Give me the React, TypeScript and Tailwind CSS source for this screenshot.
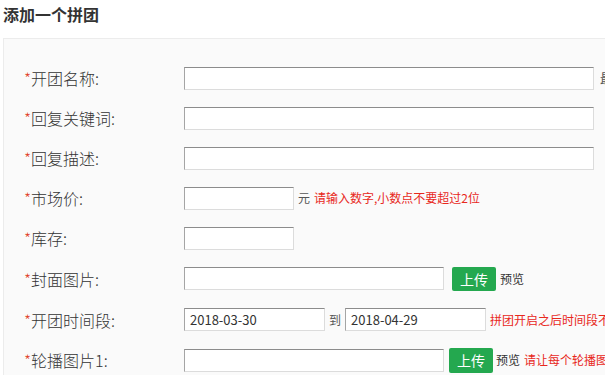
const font = { fontFamily: '"Microsoft YaHei", "Noto Sans CJK SC", "Noto Sans", sans-serif' };

function Label({ text }: { text: string }) {
  return (
    <div className="w-[180px] shrink-0 pl-[20px] text-[16px] font-light text-[#333]">
      <span className="text-[#e0402a]">*</span>
      {text}
    </div>
  );
}

function Field({ w, value }: { w: string; value?: string }) {
  return (
    <div
      className={`${w} h-[23px] shrink-0 bg-white border border-t-[#8c8c8c] border-l-[#a5a5a5] border-r-[#dcdcdc] border-b-[#dcdcdc] px-[5px] text-[13px] leading-[21px] text-[#333]`}
    >
      {value}
    </div>
  );
}

export default function App() {
  return (
    <div className="h-[375px] w-[605px] overflow-hidden bg-white whitespace-nowrap" style={font}>
      <div className="px-[3px] pt-[3px] text-[16px] font-bold leading-[22px] text-[#333]">添加一个拼团</div>
      <div className="ml-[3px] mt-[13px] w-[700px] border border-[#ececec] bg-[#fafafa] pt-[19px] pb-[20px]">
        <div className="flex h-[40px] items-center">
          <Label text="开团名称:" />
          <Field w="w-[410px]" />
          <span className="ml-[6px] text-[13px] text-[#555]">最多输入</span>
        </div>
        <div className="flex h-[40px] items-center">
          <Label text="回复关键词:" />
          <Field w="w-[410px]" />
        </div>
        <div className="flex h-[40px] items-center">
          <Label text="回复描述:" />
          <Field w="w-[410px]" />
        </div>
        <div className="flex h-[40px] items-center">
          <Label text="市场价:" />
          <Field w="w-[110px]" />
          <span className="ml-[4px] text-[12px] text-[#555]">元</span>
          <span className="ml-[4px] text-[12px] text-[#e8281c]">请输入数字,小数点不要超过2位</span>
        </div>
        <div className="flex h-[40px] items-center">
          <Label text="库存:" />
          <Field w="w-[110px]" />
        </div>
        <div className="flex h-[41px] items-center">
          <Label text="封面图片:" />
          <Field w="w-[260px]" />
          <div className="ml-[8px] h-[24px] w-[44px] shrink-0 rounded-[2px] bg-[#24a84f] text-center text-[14px] leading-[24px] text-white">
            上传
          </div>
          <span className="ml-[4px] text-[12px] text-[#333]">预览</span>
        </div>
        <div className="flex h-[41px] items-center">
          <Label text="开团时间段:" />
          <Field w="w-[141px]" value="2018-03-30" />
          <span className="mx-[4px] text-[12px] text-[#555]">到</span>
          <Field w="w-[141px]" value="2018-04-29" />
          <span className="ml-[4px] text-[12px] text-[#e8281c]">拼团开启之后时间段不可修改</span>
        </div>
        <div className="flex h-[40px] items-center">
          <Label text="轮播图片1:" />
          <Field w="w-[260px]" />
          <div className="ml-[5px] h-[25px] w-[44px] shrink-0 rounded-[2px] bg-[#24a84f] text-center text-[14px] leading-[25px] text-white">
            上传
          </div>
          <span className="ml-[3px] text-[12px] text-[#333]">预览</span>
          <span className="ml-[4px] text-[12px] text-[#e8281c]">请让每个轮播图片尺寸一致</span>
        </div>
      </div>
    </div>
  );
}
